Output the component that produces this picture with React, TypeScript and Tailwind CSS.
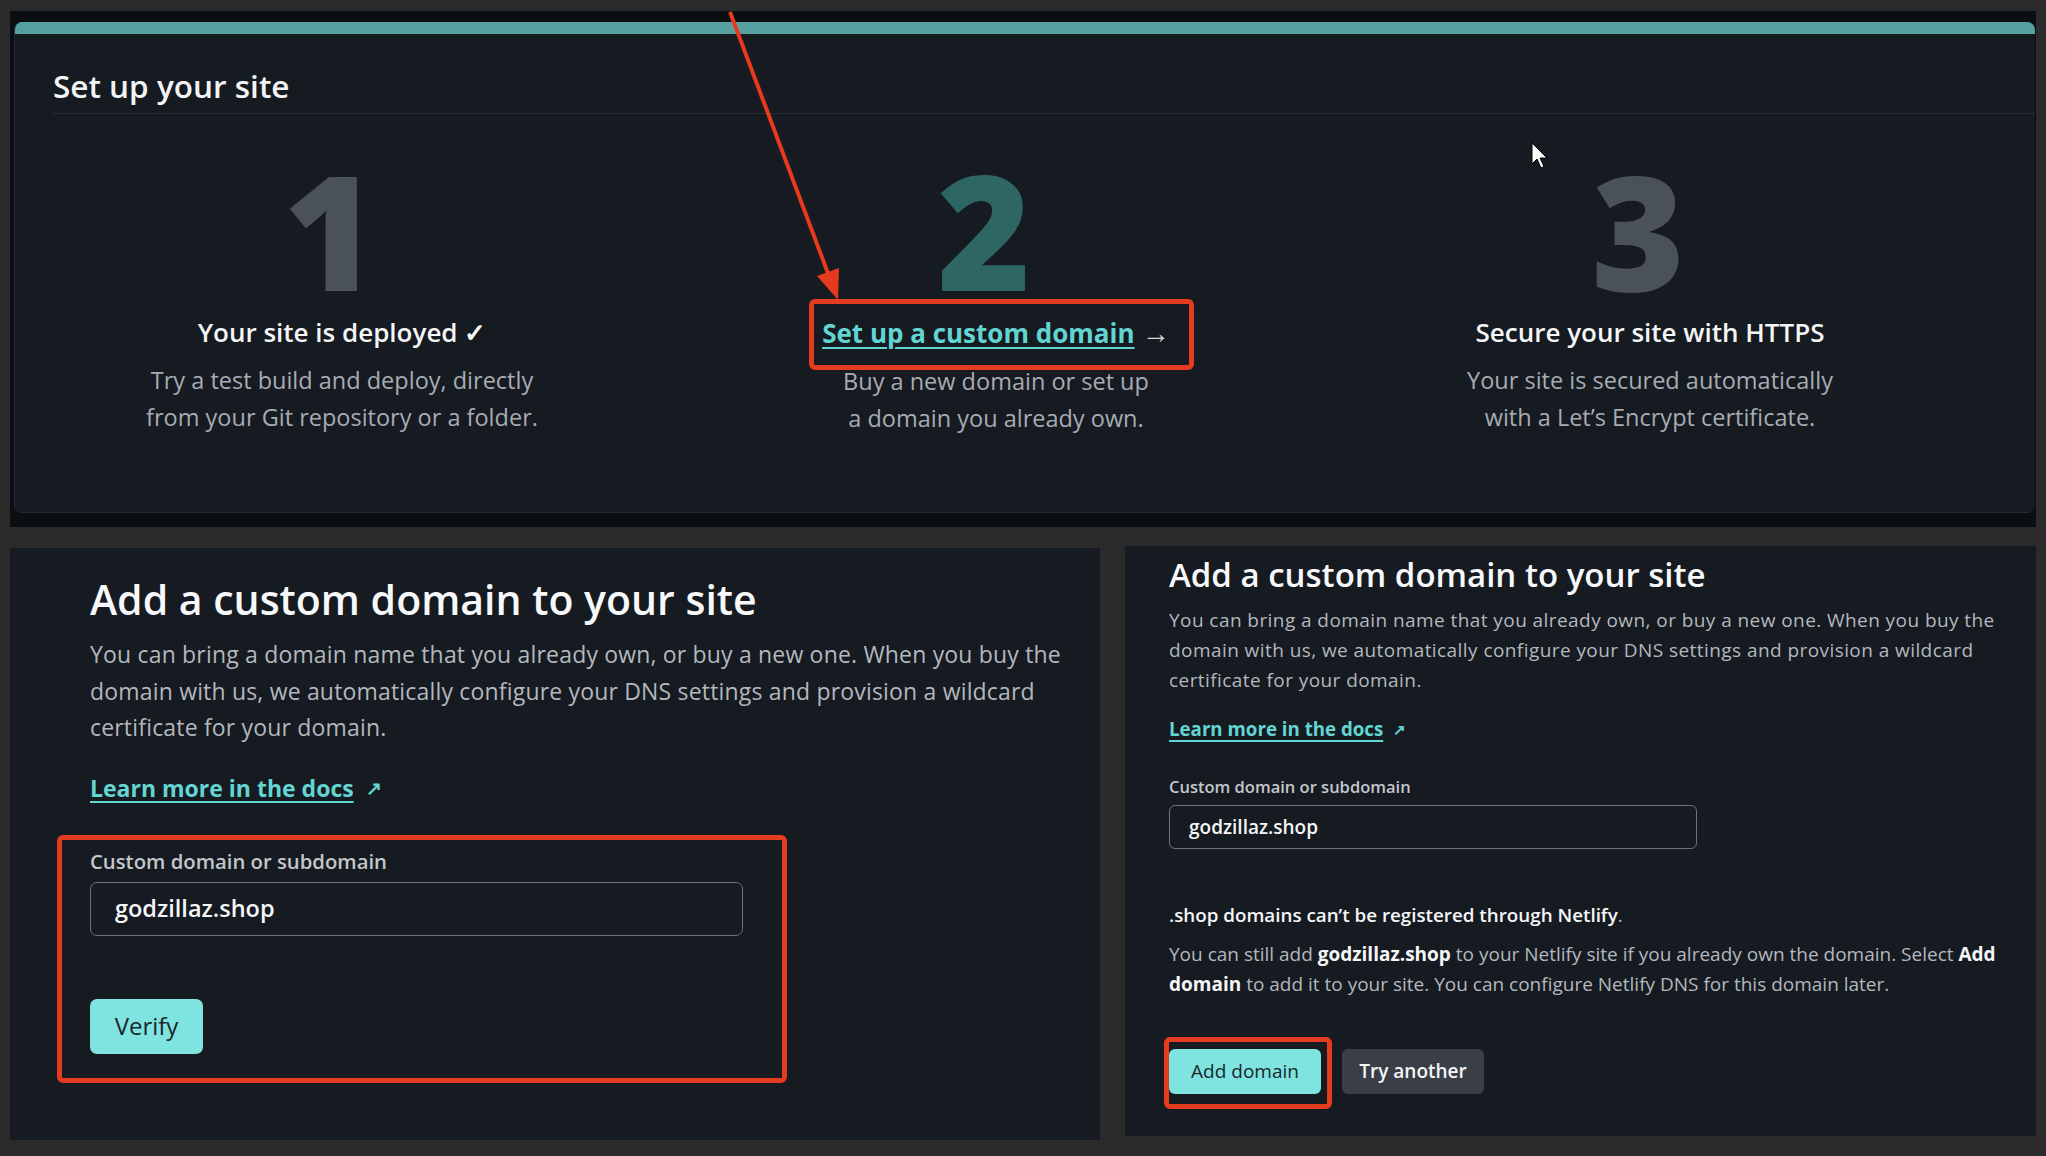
import React from "react";

const font = { fontFamily: '"Open Sans", "Noto Sans", sans-serif' };

function Step({
  num,
  numClass,
  title,
  lines,
}: {
  num: string;
  numClass: string;
  title: React.ReactNode;
  lines: string[];
}) {
  return (
    <div className="flex flex-col items-center text-center pt-[35px]">
      <div
        className={`h-[160px] mr-[24px] text-[160px] leading-[160px] font-extrabold font-stretch-[93%] ${numClass}`}
      >
        {num}
      </div>
      <div className="mt-[5px] text-[26px] leading-[36px] font-semibold text-[#f4f5f6] whitespace-nowrap">
        {title}
      </div>
      <div className="mt-[12px] text-[23.5px] leading-[37px] text-[#a7acb3]">
        {lines.map((l) => (
          <div key={l} className="whitespace-nowrap">
            {l}
          </div>
        ))}
      </div>
    </div>
  );
}

function LearnMore({ size }: { size: "lg" | "sm" }) {
  return (
    <div
      className={
        size === "lg"
          ? "mt-[27px] text-[23px] leading-[30px] font-bold flex items-center gap-[12px]"
          : "mt-[19px] text-[18.7px] leading-[30px] font-bold flex items-center gap-[10px]"
      }
    >
      <span className="text-[#63d6d3] underline decoration-2 underline-offset-[4px]">Learn more in the docs</span>
      <span className={size === "lg" ? "text-[#63d6d3] text-[19px]" : "text-[#63d6d3] text-[15px]"}>↗</span>
    </div>
  );
}

export default function App() {
  return (
    <div className="relative w-[2046px] h-[1156px] bg-[#2b2b2b] overflow-hidden" style={font}>
      {/* Top panel */}
      <div className="ml-[10px] mt-[11px] w-[2026px] h-[516px] bg-[#0b0e13] pt-[11px] pl-[4px] pr-[1px]">
        <div className="w-[2021px] h-[491px] rounded-[8px] overflow-hidden bg-[#161a21] border-b border-l border-[#252a31] flex flex-col">
          <div className="h-[12px] bg-[#56a19f]" />
          <div className="h-[80px] ml-[38px] pt-[32px] border-b border-[#272c33]">
            <div className="text-[31.5px] leading-[40px] font-semibold text-[#f2f3f4]">Set up your site</div>
          </div>
          <div className="grid grid-cols-[654px_654px_654px]">
            <Step
              num="1"
              numClass="text-[#4b5159]"
              title={<>Your site is deployed ✓</>}
              lines={["Try a test build and deploy, directly", "from your Git repository or a folder."]}
            />
            <Step
              num="2"
              numClass="text-[#2e6664]"
              title={
                <span className="font-bold">
                  <span className="text-[#62d5d2] underline decoration-2 underline-offset-[4px]">
                    Set up a custom domain
                  </span>
                  <span className="text-[#d5d8dc] font-normal text-[28px]"> →</span>
                </span>
              }
              lines={["Buy a new domain or set up", "a domain you already own."]}
            />
            <Step
              num="3"
              numClass="text-[#4b5159]"
              title="Secure your site with HTTPS"
              lines={["Your site is secured automatically", "with a Let’s Encrypt certificate."]}
            />
          </div>
        </div>
      </div>

      {/* Bottom row */}
      <div className="flex items-start ml-[10px] gap-[25px]">
        {/* Left panel */}
        <div className="mt-[21px] w-[1090px] h-[592px] bg-[#161a21] pl-[80px] pt-[27px]">
          <h2 className="text-[41px] leading-[48px] font-semibold text-[#f7f8f9] whitespace-nowrap">
            Add a custom domain to your site
          </h2>
          <div className="mt-[13px] text-[23px] leading-[36.5px] tracking-[0.18px] text-[#b3b8be]">
            <div className="whitespace-nowrap">
              You can bring a domain name that you already own, or buy a new one. When you buy the
            </div>
            <div className="whitespace-nowrap">
              domain with us, we automatically configure your DNS settings and provision a wildcard
            </div>
            <div className="whitespace-nowrap">certificate for your domain.</div>
          </div>
          <LearnMore size="lg" />
          <div className="mt-[46px] text-[20.3px] leading-[24px] font-semibold text-[#c3c7cc]">
            Custom domain or subdomain
          </div>
          <div className="mt-[9px] w-[653px] h-[54px] rounded-[7px] border-[1.5px] border-[#6e737b] pl-[24px] flex items-center text-[23.5px] font-semibold text-[#f5f6f7]">
            godzillaz.shop
          </div>
          <button className="mt-[63px] w-[113px] h-[55px] rounded-[7px] bg-[#7fe3e0] text-[24px] font-medium text-[#17272c] flex items-center justify-center">
            Verify
          </button>
        </div>

        {/* Right panel */}
        <div className="mt-[19px] w-[911px] h-[590px] bg-[#161a21] pl-[44px] pt-[9px]">
          <h2 className="text-[33px] leading-[40px] font-semibold text-[#f7f8f9] whitespace-nowrap">
            Add a custom domain to your site
          </h2>
          <div className="mt-[10px] text-[19px] leading-[30px] tracking-[0.43px] text-[#b3b8be]">
            <div className="whitespace-nowrap">
              You can bring a domain name that you already own, or buy a new one. When you buy the
            </div>
            <div className="whitespace-nowrap">
              domain with us, we automatically configure your DNS settings and provision a wildcard
            </div>
            <div className="whitespace-nowrap">certificate for your domain.</div>
          </div>
          <LearnMore size="sm" />
          <div className="mt-[32px] text-[16.5px] leading-[22px] font-semibold text-[#c3c7cc]">
            Custom domain or subdomain
          </div>
          <div className="mt-[7px] w-[528px] h-[44px] rounded-[6px] border-[1.5px] border-[#6e737b] pl-[19px] flex items-center text-[19px] font-semibold text-[#f5f6f7]">
            godzillaz.shop
          </div>
          <div className="mt-[51px] text-[18.8px] leading-[30px] font-semibold text-[#f5f6f7]">
            .shop domains can’t be registered through Netlify<span className="font-normal text-[#b3b8be]">.</span>
          </div>
          <div className="mt-[9px] text-[19px] leading-[30px] text-[#b3b8be]">
            <div className="whitespace-nowrap">
              You can still add <b className="font-bold text-[#f5f6f7]">godzillaz.shop</b> to your Netlify site if you
              already own the domain. Select <b className="font-bold text-[#f5f6f7]">Add</b>
            </div>
            <div className="whitespace-nowrap">
              <b className="font-bold text-[#f5f6f7]">domain</b> to add it to your site. You can configure Netlify DNS for
              this domain later.
            </div>
          </div>
          <div className="mt-[50px] flex gap-[21px]">
            <button className="w-[152px] h-[45px] rounded-[6px] bg-[#7fe3e0] text-[19px] font-medium text-[#17272c] flex items-center justify-center">
              Add domain
            </button>
            <button className="w-[142px] h-[45px] rounded-[6px] bg-[#3a3e46] text-[19px] font-semibold text-[#f5f6f7] flex items-center justify-center">
              Try another
            </button>
          </div>
        </div>
      </div>

      {/* Annotations */}
      <div className="absolute left-[809px] top-[299px] w-[385px] h-[71px] border-[5px] border-[#e53c1f] rounded-[6px] pointer-events-none" />
      <div className="absolute left-[57px] top-[835px] w-[730px] h-[248px] border-[5px] border-[#e53c1f] rounded-[6px] pointer-events-none" />
      <div className="absolute left-[1164px] top-[1037px] w-[168px] h-[72px] border-[5px] border-[#e53c1f] rounded-[6px] pointer-events-none" />
      <svg className="absolute left-0 top-0 pointer-events-none" width="2046" height="1156" viewBox="0 0 2046 1156">
        <line x1="730" y1="12" x2="829" y2="276" stroke="#e63a1e" strokeWidth="4" />
        <polygon points="838,300 817,276 839,268" fill="#e63a1e" />
        <path
          d="M1532 143 L1532 164 L1537 159 L1541 168 L1544 166.5 L1540 158 L1547 158 Z"
          fill="#ffffff"
          stroke="#000000"
          strokeWidth="1"
          strokeLinejoin="round"
        />
      </svg>
    </div>
  );
}
